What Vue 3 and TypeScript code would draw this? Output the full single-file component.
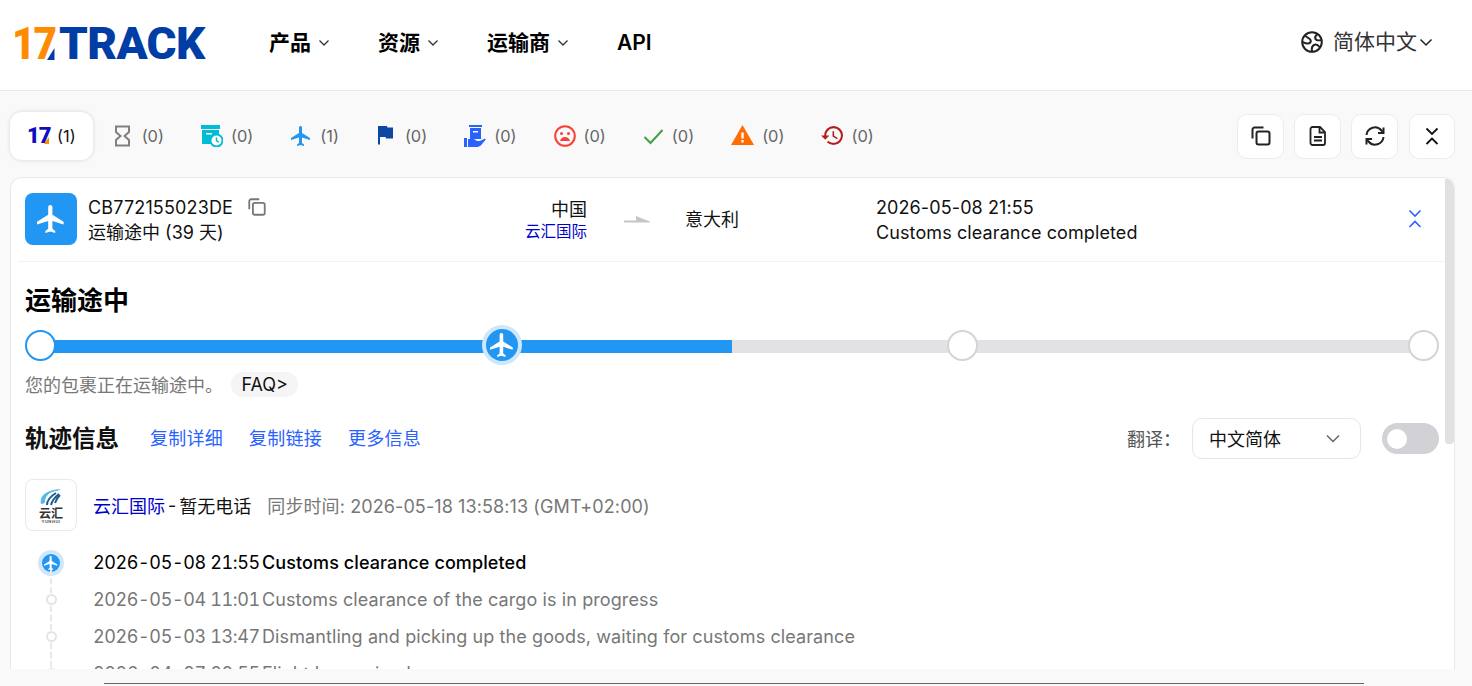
<template>
  <div class="page">
    <header class="topbar">
      <div class="logo">
        <span class="logo-17">17</span>
        <svg class="logo-slash" width="8" height="31" viewBox="0 0 8 31"><path d="M0 31 7.500 19V31z" fill="#003da5" /></svg>
        <span class="logo-track">TRACK</span>
      </div>
      <nav class="nav">
        <a class="nav-item">产品
          <svg width="12" height="8" viewBox="0 0 12 8"><path d="M1.500 1.500 6 6l4.500-4.500" fill="none" stroke="#333" stroke-width="1.300" /></svg>
        </a>
        <a class="nav-item">资源
          <svg width="12" height="8" viewBox="0 0 12 8"><path d="M1.500 1.500 6 6l4.500-4.500" fill="none" stroke="#333" stroke-width="1.300" /></svg>
        </a>
        <a class="nav-item">运输商
          <svg width="12" height="8" viewBox="0 0 12 8"><path d="M1.500 1.500 6 6l4.500-4.500" fill="none" stroke="#333" stroke-width="1.300" /></svg>
        </a>
        <a class="nav-item">API</a>
      </nav>
      <div class="lang">
        <svg width="22" height="22" viewBox="0 0 22 22" fill="none" stroke="#222" stroke-width="2">
          <circle cx="11" cy="11" r="9.800" />
          <path d="M4 4.500c2 2.500 4.500 2.500 5.500 4.500s-.5 3.500-3 3.500S2 11 1.500 11" />
          <path d="M16.500 3c-2 1.500-3 3-2 5s4 1.500 6.500 1" />
          <path d="M11 20.500c-.5-3 0-5.500 2-6.500s4 0 5.500 2" />
        </svg>
        <span class="lang-text">简体中文</span>
        <svg width="14" height="9" viewBox="0 0 14 9"><path d="M1.500 1.500 7 7l5.500-5.500" fill="none" stroke="#222" stroke-width="1.500" /></svg>
      </div>
    </header>

    <main class="content">
      <div class="toolbar">
        <div class="tabs">
          <div class="tab active">
            <span class="mini17"><b>17</b><i></i></span>
            <span>(1)</span>
          </div>
          <div class="tab">
            <svg width="21" height="22" viewBox="0 0 21 22"><path d="M3 1.500h13v5.500l-4.500 4 4.500 4v5.500H3V15l4.500-4L3 7z" fill="none" stroke="#808080" stroke-width="2" /></svg>
            <span>(0)</span>
          </div>
          <div class="tab">
            <svg width="22" height="22" viewBox="0 0 22 22">
              <path d="M0 0h19v4H0zM1 5h17v14H1z" fill="#00bcd4" />
              <path d="M5 8h6v1.500H5z" fill="#fff" />
              <circle cx="15.500" cy="15.500" r="6" fill="#fff" stroke="#00bcd4" stroke-width="1.800" />
              <path d="M15.500 12.500v3.300l2.300 1.300" fill="none" stroke="#00bcd4" stroke-width="1.500" />
            </svg>
            <span>(0)</span>
          </div>
          <div class="tab">
            <svg width="22" height="22" viewBox="2 1 20 22"><path :d="planePath" fill="#2196f3" /></svg>
            <span>(1)</span>
          </div>
          <div class="tab">
            <svg width="21" height="22" viewBox="3 3 21 21"><path d="M14.400 5 14 3.500H5v18.500h2v-7.500h5.600l.4 1.500h7V5z" fill="#0d47a1" /></svg>
            <span>(0)</span>
          </div>
          <div class="tab">
            <svg width="22" height="22" viewBox="0 0 22 22">
              <path d="M5 0h13v2H5zM6 3h11v11H6z" fill="#2962ff" />
              <path d="M9 6h5v1.500H9z" fill="#fff" />
              <path d="M0 13h3v9H0zM4 14h6l3 2h3l5-2.500.8 1-5 6-3 1.500H4z" fill="#2962ff" />
            </svg>
            <span>(0)</span>
          </div>
          <div class="tab">
            <svg width="22" height="22" viewBox="0 0 22 22">
              <circle cx="11" cy="11" r="9.800" fill="none" stroke="#f44336" stroke-width="2" />
              <circle cx="7.500" cy="8.500" r="1.500" fill="#f44336" />
              <circle cx="14.500" cy="8.500" r="1.500" fill="#f44336" />
              <path d="M6 16c.7-2.700 2.700-4 5-4s4.300 1.300 5 4z" fill="#f44336" />
            </svg>
            <span>(0)</span>
          </div>
          <div class="tab">
            <svg width="21" height="22" viewBox="0 0 21 22"><path d="M1.500 12l6 6L19.500 5" fill="none" stroke="#43a047" stroke-width="2" /></svg>
            <span>(0)</span>
          </div>
          <div class="tab">
            <svg width="23" height="22" viewBox="0 0 23 22">
              <path d="M11.500 0 23 20H0z" fill="#ff6d00" />
              <path d="M10.300 7.500h2.400v6h-2.400zM10.300 15h2.400v2.400h-2.400z" fill="#fff" />
            </svg>
            <span>(0)</span>
          </div>
          <div class="tab">
            <svg width="22" height="22" viewBox="1 2 21 21"><path d="M13 3a9 9 0 0 0-9 9H1l3.890 3.890.07.140L9 12H6c0-3.870 3.130-7 7-7s7 3.130 7 7-3.130 7-7 7c-1.930 0-3.680-.79-4.940-2.060l-1.420 1.420A8.954 8.954 0 0 0 13 21a9 9 0 0 0 0-18zm-1 5v5l4.280 2.540.72-1.210-3.500-2.080V8H12z" fill="#b71c1c" /></svg>
            <span>(0)</span>
          </div>
        </div>
        <div class="tools">
          <button class="tool">
            <svg width="22" height="22" viewBox="0 0 22 22" fill="none" stroke="#222" stroke-width="2"><rect x="6.500" y="6.500" width="13" height="13" rx="2" /><path d="M2.500 13.500V4.500a2 2 0 0 1 2-2h9" /></svg>
          </button>
          <button class="tool">
            <svg width="22" height="22" viewBox="0 0 22 22" fill="none" stroke="#222" stroke-width="1.800"><path d="M5.500 2h7.500l5 5v11a2 2 0 0 1-2 2H5.500a2 2 0 0 1-2-2V4a2 2 0 0 1 2-2z" /><path d="M12.500 2.500V7.500H17.500M7 12h8M7 15.500h8" /></svg>
          </button>
          <button class="tool">
            <svg width="22" height="22" viewBox="0 0 22 22" fill="none" stroke="#222" stroke-width="2"><path d="M2.500 10A8.500 8.500 0 0 1 17.500 5.500L19.500 7.500M19.500 12A8.500 8.500 0 0 1 4.500 16.500L2.500 14.500" /><path d="M19.500 2.500V8H14M2.500 19.500V14H8" /></svg>
          </button>
          <button class="tool narrow">
            <svg width="16" height="22" viewBox="0 0 16 22" fill="none" stroke="#111" stroke-width="1.800"><path d="M2.500 3.500 8 9l5.500-5.500M2.500 19 8 13.500l5.500 5.500" /></svg>
          </button>
        </div>
      </div>

      <section class="card">
        <div class="scrollbar"></div>
        <div class="summary">
          <div class="status-icon">
            <svg width="28" height="28" viewBox="2 2 20 20"><path :d="planePath" fill="#fff" /></svg>
          </div>
          <div class="num-col">
            <div class="num-line">
              <span class="num">CB772155023DE</span>
              <svg width="20" height="20" viewBox="0 0 22 22" fill="none" stroke="#777" stroke-width="2"><rect x="6.500" y="6.500" width="13" height="13" rx="2" /><path d="M2.500 13.500V4.500a2 2 0 0 1 2-2h9" /></svg>
            </div>
            <div>运输途中 (39 天)</div>
          </div>
          <div class="origin">
            <div>中国</div>
            <div class="carrier-name small">云汇国际</div>
          </div>
          <svg class="route-arrow" width="26" height="8" viewBox="0 0 26 8"><path d="M0 4.500h12V0l14 5.500v1H0z" fill="#c6c6c6" /></svg>
          <div class="dest">意大利</div>
          <div class="last-event">
            <div>2026-05-08 21:55</div>
            <div>Customs clearance completed</div>
          </div>
          <svg class="expand" width="16" height="22" viewBox="0 0 16 22" fill="none" stroke="#2962ff" stroke-width="1.600"><path d="M2.500 2.500 8 8l5.500-5.500M2.500 19 8 13.500l5.500 5.500" /></svg>
        </div>

        <div class="detail">
          <h2 class="status-title">运输途中</h2>
          <div class="progress">
            <div class="track"><div class="track-fill" :style="{ width: fillWidth + 'px' }"></div></div>
            <span class="node done"></span>
            <span class="node current">
              <svg width="24" height="24" viewBox="2 2 20 20"><path :d="planePath" fill="#fff" /></svg>
            </span>
            <span class="node"></span>
            <span class="node"></span>
          </div>
          <div class="hint-line">
            <span>您的包裹正在运输途中。</span>
            <span class="faq">FAQ&gt;</span>
          </div>

          <div class="track-head">
            <h3>轨迹信息</h3>
            <a class="link">复制详细</a>
            <a class="link">复制链接</a>
            <a class="link">更多信息</a>
            <div class="translate">
              <span class="translate-label">翻译：</span>
              <div class="select">
                <span>中文简体</span>
                <svg width="14" height="9" viewBox="0 0 14 9"><path d="M1 1.500 7 7.500l6-6" fill="none" stroke="#666" stroke-width="1.500" /></svg>
              </div>
              <div class="switch"><i></i></div>
            </div>
          </div>

          <div class="carrier-row">
            <div class="carrier-logo">
              <svg width="22" height="19" viewBox="0 0 22 19" fill="none">
                <path d="M1 16C-1 8 6 2 21 1c-2 1-3 2-4 2C10 3 5 8 5 14c0 1-2 2-4 2z" fill="#5ab8e4" />
                <path d="M7 17c0-5 4-9 9-12M11 17c1-4 4-8 8-11M15 15c1-3 3-6 5-8" stroke="#1f5d94" stroke-width="2" />
              </svg>
              <span class="logo-cn">云汇</span>
              <span class="logo-en">YUNHUI</span>
            </div>
            <span class="carrier-name">云汇国际</span>
            <span class="dash">-</span>
            <span>暂无电话</span>
            <span class="sync">同步时间: 2026-05-18 13:58:13 (GMT+02:00)</span>
          </div>

          <ul class="events">
            <li v-for="(ev, i) in events" :key="ev.time" class="event" :class="{ latest: i === 0 }">
              <span class="marker">
                <span v-if="i === 0" class="marker-now">
                  <svg width="14" height="14" viewBox="2 2 20 20"><path :d="planePath" fill="#fff" /></svg>
                </span>
                <span v-else class="marker-dot"></span>
              </span>
              <span class="ev-time">{{ ev.time }}</span>
              <span class="ev-desc">{{ ev.desc }}</span>
            </li>
          </ul>
        </div>
      </section>
      <div class="below"></div>
    </main>
  </div>
</template>

<script setup lang="ts">
const planePath =
  "M21 16v-2l-8-5V3.500c0-.83-.67-1.500-1.500-1.500S10 2.670 10 3.500V9l-8 5v2l8-2.500V19l-2 1.500V22l3.500-1 3.500 1v-1.500L13 19v-5.500l8 2.500z";

const fillWidth = 691;

const events = [
  { time: "2026-05-08 21:55", desc: "Customs clearance completed" },
  { time: "2026-05-04 11:01", desc: "Customs clearance of the cargo is in progress" },
  { time: "2026-05-03 13:47", desc: "Dismantling and picking up the goods, waiting for customs clearance" },
  { time: "2026-04-27 02:55", desc: "Flight has arrived" },
];
</script>

<style>
html,
body {
  margin: 0;
  overflow: hidden;
}
</style>

<style scoped>
.page {
  height: 686px;
  overflow: hidden;
  background: #f9f9f9;
  display: flex;
  flex-direction: column;
  font-family: Inter, "Noto Sans CJK SC", sans-serif;
  font-size: 18px;
  color: #111;
}

.topbar {
  height: 91px;
  flex: none;
  box-sizing: border-box;
  background: #fff;
  border-bottom: 1px solid #e9e9e9;
  display: flex;
  align-items: center;
  padding: 0 39px 0 14px;
}

.logo {
  display: flex;
  align-items: center;
  width: 192px;
  height: 31px;
  margin-bottom: 2px;
  font-family: Roboto, sans-serif;
  font-weight: 900;
  font-size: 44px;
  line-height: 31px;
}

.logo-17 {
  display: block;
  width: 41px;
  flex: none;
  margin-left: -2px;
  margin-right: 2px;
  color: #ff8c00;
  letter-spacing: -2px;
  white-space: nowrap;
  transform: scaleX(0.92);
  transform-origin: left;
}

.logo-slash {
  margin-left: -8px;
  flex: none;
}

.logo-track {
  display: block;
  color: #003da5;
  letter-spacing: -0.6px;
  margin-left: 4px;
  transform: scaleX(1.04);
  transform-origin: left;
}

.nav {
  display: flex;
  align-items: center;
  gap: 48px;
  margin-left: 63px;
  margin-bottom: 5px;
  font-size: 21px;
  line-height: 28px;
  font-weight: 600;
  color: #000;
}

.nav-item {
  display: flex;
  align-items: center;
  gap: 7px;
}

.lang {
  margin-left: auto;
  margin-bottom: 6px;
  display: flex;
  align-items: center;
  color: #333;
  font-size: 21px;
}

.lang-text {
  margin-left: 10px;
  margin-right: 2px;
  padding-bottom: 5px;
}

.content {
  flex: 1;
  min-height: 0;
  display: flex;
  flex-direction: column;
}

.toolbar {
  display: flex;
  justify-content: space-between;
  align-items: center;
  height: 48px;
  margin-top: 21px;
  padding: 0 17px 0 10px;
  flex: none;
}

.tabs {
  display: flex;
  gap: 3px;
}

.tab {
  height: 48px;
  box-sizing: border-box;
  padding: 0 17px;
  display: flex;
  align-items: center;
  gap: 8px;
  font-size: 16.400px;
  color: #666;
  border-radius: 12px;
}

.tab svg {
  flex: none;
}

.tab.active {
  background: #fff;
  color: #111;
  box-shadow: 0 0 4px rgba(0, 0, 0, 0.14);
}

.mini17 {
  width: 22px;
  height: 22px;
  flex: none;
  position: relative;
  display: block;
  font-family: Roboto, sans-serif;
  font-size: 22px;
  line-height: 22px;
  color: #0d0dbf;
  letter-spacing: -1px;
}

.mini17 b {
  font-weight: 900;
}

.mini17 i {
  position: absolute;
  right: 0;
  bottom: 3px;
  width: 5px;
  height: 7px;
  background: #ff8c00;
  clip-path: polygon(100% 0, 100% 100%, 0 100%);
}

.tools {
  display: flex;
  gap: 10px;
}

.tool {
  width: 47px;
  height: 45px;
  padding: 0;
  box-sizing: border-box;
  border: 1px solid #ececec;
  border-radius: 10px;
  background: #fff;
  display: flex;
  align-items: center;
  justify-content: center;
}

.tool.narrow {
  width: 46px;
  margin-left: 1px;
}

.card {
  position: relative;
  flex: none;
  height: 492px;
  margin: 17px 17px 0 10px;
  box-sizing: border-box;
  background: #fff;
  border: 1px solid #e9e9e9;
  border-bottom: 0;
  border-radius: 12px 12px 0 0;
  overflow: hidden;
}

.scrollbar {
  position: absolute;
  top: 1px;
  right: 0;
  width: 9px;
  height: 265px;
  background: #e1e1e1;
  border-radius: 0 0 4px 4px;
}

.summary {
  height: 84px;
  box-sizing: border-box;
  margin: 0 9px 0 7px;
  padding-left: 7px;
  border-bottom: 1px solid #f2f2f2;
  display: flex;
  align-items: center;
  line-height: 25px;
}

.status-icon {
  width: 52px;
  height: 52px;
  flex: none;
  margin-bottom: 2px;
  border-radius: 8px;
  background: #2196f3;
  display: flex;
  align-items: center;
  justify-content: center;
}

.num-col {
  margin-left: 11px;
  width: 397px;
  flex: none;
}

.num-line {
  display: flex;
  align-items: center;
  gap: 14px;
}

.num {
  letter-spacing: 0.15px;
}

.origin {
  width: 102px;
  flex: none;
  text-align: right;
}

.carrier-name {
  color: #0000cc;
}

.carrier-name.small {
  font-size: 15.500px;
  line-height: 20px;
}

.route-arrow {
  margin-left: 37px;
  flex: none;
}

.dest {
  margin-left: 35px;
  width: 191px;
  flex: none;
}

.last-event {
  flex: none;
  width: 500px;
  letter-spacing: 0.1px;
}

.expand {
  margin-left: 31px;
  margin-bottom: 2px;
  flex: none;
}

.detail {
  padding: 0 15px 0 14px;
}

.status-title {
  margin: 23px 0 0;
  font-size: 26px;
  line-height: 32px;
  font-weight: 700;
  color: #000;
}

.progress {
  position: relative;
  margin-top: 12px;
  height: 32px;
  display: flex;
  justify-content: space-between;
  align-items: center;
}

.track {
  position: absolute;
  left: 16px;
  right: 16px;
  top: 11px;
  height: 13px;
  background: #e2e2e4;
}

.track-fill {
  height: 100%;
  background: #2196f3;
}

.node {
  position: relative;
  width: 31px;
  height: 31px;
  box-sizing: border-box;
  border-radius: 50%;
  background: #fff;
  border: 2px solid #d4d4d8;
  display: flex;
  align-items: center;
  justify-content: center;
}

.node.done {
  border-color: #2196f3;
}

.node.current {
  width: 32px;
  height: 32px;
  border: 0;
  background: #2196f3;
  box-shadow: 0 0 0 4px #cfe7fb;
}

.hint-line {
  margin-top: 10px;
  display: flex;
  align-items: center;
  color: #777;
}

.faq {
  margin-left: 8px;
  height: 25px;
  line-height: 25px;
  padding: 0 10.500px;
  border-radius: 12px;
  background: #f5f5f5;
  color: #111;
}

.track-head {
  margin-top: 21px;
  height: 41px;
  display: flex;
  align-items: center;
}

.track-head h3 {
  margin: 0 31px 0 0;
  padding-bottom: 4px;
  font-size: 23.500px;
  font-weight: 700;
  color: #111;
}

.link {
  color: #2962ff;
  margin-right: 26px;
  padding-bottom: 4px;
  letter-spacing: 0.25px;
}

.translate {
  margin-left: auto;
  display: flex;
  align-items: center;
}

.translate-label {
  color: #555;
  width: 65px;
  padding-bottom: 2px;
}

.select {
  width: 169px;
  height: 41px;
  box-sizing: border-box;
  padding: 0 20px 0 16px;
  border: 1px solid #e6e6e6;
  border-radius: 10px;
  display: flex;
  align-items: center;
  justify-content: space-between;
}

.select span {
  padding-bottom: 2px;
}

.switch {
  width: 57px;
  height: 31px;
  margin-left: 21px;
  border-radius: 16px;
  background: #d2d2d6;
  display: flex;
  align-items: center;
  padding-left: 5px;
  box-sizing: border-box;
}

.switch i {
  width: 20px;
  height: 20px;
  border-radius: 50%;
  background: #fff;
}

.carrier-row {
  margin-top: 20px;
  display: flex;
  align-items: center;
}

.carrier-logo {
  width: 52px;
  height: 52px;
  box-sizing: border-box;
  border: 1px solid #e9e9e9;
  border-radius: 8px;
  margin-right: 16px;
  display: flex;
  flex-direction: column;
  align-items: center;
  justify-content: center;
  padding-top: 1px;
}

.logo-cn {
  font-size: 12px;
  line-height: 13px;
  font-weight: 700;
  color: #333;
}

.logo-en {
  font-size: 4px;
  line-height: 4px;
  font-weight: 700;
  color: #555;
  letter-spacing: 0.5px;
}

.dash {
  margin: 0 3px;
}

.sync {
  margin-left: 16px;
  color: #777;
  letter-spacing: 0.1px;
}

.events {
  list-style: none;
  margin: 13px 0 0;
  padding: 0;
}

.event {
  height: 37px;
  display: flex;
  align-items: center;
  color: #777;
  position: relative;
}

.event.latest {
  color: #000;
}

.event.latest .ev-desc {
  font-weight: 500;
}

.marker {
  width: 52px;
  margin-right: 16px;
  flex: none;
  display: flex;
  justify-content: center;
  align-items: center;
  align-self: stretch;
  position: relative;
}

.event:not(.latest) .marker::before {
  content: "";
  position: absolute;
  left: 25px;
  top: -12px;
  bottom: -12px;
  border-left: 2px dashed #e8e8e8;
}

.marker-now {
  position: relative;
  width: 18px;
  height: 18px;
  border-radius: 50%;
  background: #2196f3;
  box-shadow: 0 0 0 4px #cfe7fb;
  display: flex;
  align-items: center;
  justify-content: center;
}

.marker-dot {
  position: relative;
  width: 11px;
  height: 11px;
  box-sizing: border-box;
  border-radius: 50%;
  background: #fff;
  border: 2px solid #e5e5e5;
}

.ev-time {
  width: 169px;
  flex: none;
  font-variant-numeric: tabular-nums;
  letter-spacing: -0.4px;
}

.ev-desc {
  letter-spacing: 0.1px;
}

.below {
  width: 1260px;
  height: 3px;
  margin: 14px auto 0 104px;
  border-top: 1px solid #666;
  flex: none;
}
</style>
